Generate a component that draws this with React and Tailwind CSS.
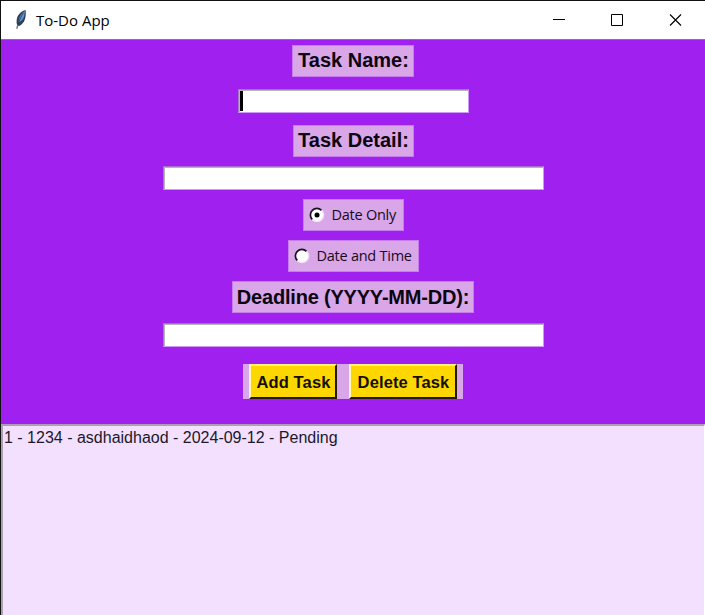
const ARIAL = "font-['Liberation_Sans',Arial,sans-serif]";
const SEGOE = "font-['Open_Sans','Noto_Sans',sans-serif]";

function Feather() {
  return (
    <svg width="14" height="22" viewBox="0 0 14 22" className="block">
      <path d="M11.500 1C7.500 2 3.600 5.500 2.800 10c-.4 2.500-.2 4.500.4 6.500l2 .5c2.800-1.500 5-4 5.800-7 .8-3 1.100-6 .5-9z" fill="#2c3f56" />
      <path d="M10.800 2C7.500 4 5 8 4.400 13.800c2.800-1.500 4.900-3.500 5.600-6.300.6-2 .8-3.500.8-5.500z" fill="#5f95d2" />
      <path d="M9.500 3.500C7 7.500 4.800 12 3.200 19" fill="none" stroke="#26384e" strokeWidth=".8" />
      <path d="M3.700 15.500L2.800 19.800" fill="none" stroke="#777" strokeWidth="1.200" />
    </svg>
  );
}

function TitleBar() {
  return (
    <header className="flex h-[39px] items-center border-t border-[#111] bg-white pl-[13px]">
      <Feather />
      <h1 className={`ml-2 w-[76px] whitespace-nowrap text-[15px] leading-5 text-black ${SEGOE}`}>To-Do App</h1>
      <div className="ml-auto flex items-center pr-[23px]">
        <svg width="130" height="14" viewBox="0 0 130 14" fill="none" stroke="#000" className="block">
          <path d="M1 6.500h12" />
          <path d="M59.500 1.500h11v11h-11z" />
          <path d="M118 1.500l11 11M129 1.500l-11 11" strokeWidth="1.100" />
        </svg>
      </div>
    </header>
  );
}

function Label({ children, className }) {
  return (
    <div className={`flex h-[32px] justify-center whitespace-nowrap border border-[#c77cec] bg-[#d9a6e8] text-[20px] font-bold text-[#0b0510] ${ARIAL} ${className}`}>
      {children}
    </div>
  );
}

function Entry({ className, children }) {
  return (
    <div className={`flex h-[24px] border border-b-[#cf9af5] border-l-[#a876c4] border-r-[#cf9af5] border-t-[#a56fc9] bg-white ${className}`}>
      <div className="flex-1 border-l border-t border-[#b5b5b5]">{children}</div>
    </div>
  );
}

function Radio({ checked, children, className }) {
  return (
    <div className={`flex h-[32px] items-center border border-[#c77cec] bg-[#d9a6e8] pl-[5px] ${className}`}>
      <svg width="16" height="16" viewBox="0 0 16 16" className="-mt-px block shrink-0">
        <circle cx="8" cy="8" r="6.300" fill="#fff" />
        <path d="M3.300 12.500A6.400 6.400 0 0 1 12.500 3.300" fill="none" stroke="#1b111f" strokeWidth="1.700" />
        <path d="M3.300 12.700A6.500 6.500 0 0 0 12.700 3.300" fill="none" stroke="#f3dff8" strokeWidth="1.300" />
        {checked && <circle cx="8" cy="8" r="2.500" fill="#000" />}
      </svg>
      <span className={`ml-[7px] whitespace-nowrap text-[14.500px] leading-5 tracking-[-0.25px] text-[#170b1e] ${SEGOE}`}>{children}</span>
    </div>
  );
}

function ActionButton({ children, className }) {
  return (
    <button className={`h-[35px] whitespace-nowrap border-2 border-b-[#1e1900] border-l-[#fff6bd] border-r-[#1e1900] border-t-[#fff27a] bg-[#ffd700] p-0 pl-px text-[16.500px] font-bold leading-[30px] tracking-[0.12px] text-[#141000] ${ARIAL} ${className}`}>
      {children}
    </button>
  );
}

export default function App() {
  return (
    <div className="flex h-[615px] w-[705px] flex-col overflow-hidden border-l border-[#111] bg-white">
      <TitleBar />
      <main className="flex h-[385px] shrink-0 flex-col items-center border-t border-[#b04cf3] bg-[#a020f0] pt-[5px]">
        <Label className="w-[122px] pl-px leading-[28px]">Task Name:</Label>
        <Entry className="mt-[12px] w-[231px]">
          <div className="h-[20px] w-[3px] bg-black" />
        </Entry>
        <Label className="mt-[12px] w-[121px] pl-px leading-[28px]">Task Detail:</Label>
        <Entry className="mt-[9px] w-[381px]" />
        <Radio checked className="mt-[9px] w-[101px]">Date Only</Radio>
        <Radio className="mt-[9px] w-[131px]">Date and Time</Radio>
        <Label className="mt-[9px] w-[242px] leading-[30px] tracking-[-0.2px]">Deadline (YYYY-MM-DD):</Label>
        <Entry className="mt-[10px] w-[381px]" />
        <div className="mt-[17px] flex h-[35px] w-[220px] bg-[#d9a6e8] pl-[6px]">
          <ActionButton className="w-[88px]">Add Task</ActionButton>
          <ActionButton className="ml-[12px] w-[108px]">Delete Task</ActionButton>
        </div>
      </main>
      <section className="flex-1 border-l-2 border-r border-t-2 border-l-[#aaa0b2] border-r-white border-t-[#aaa0b2] bg-[#f3e0ff]">
        <p className={`ml-px mt-[2px] whitespace-nowrap text-[16px] leading-5 text-[#20182a] ${ARIAL}`}>
          1 - 1234 - asdhaidhaod - 2024-09-12 - Pending
        </p>
      </section>
    </div>
  );
}
